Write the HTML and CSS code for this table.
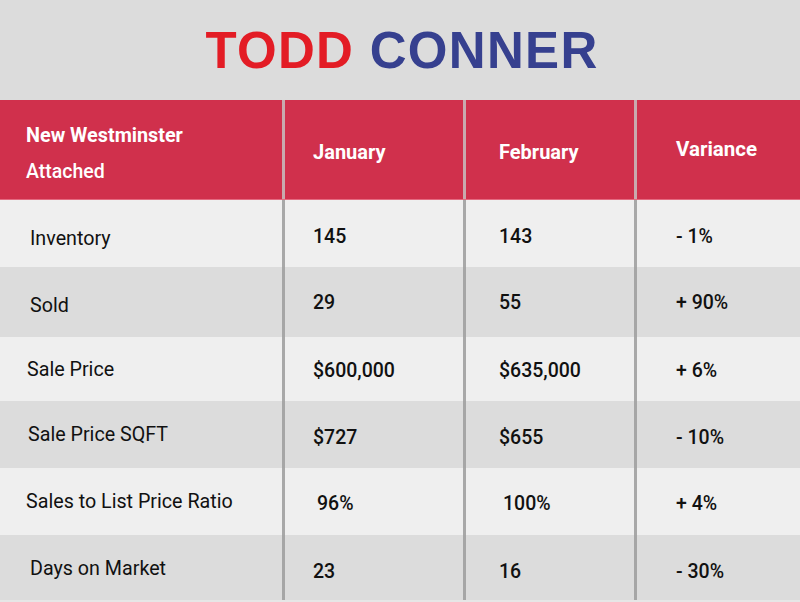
FILE: index.html
```html
<!DOCTYPE html>
<html lang="en">
<head>
<meta charset="utf-8">
<title>Todd Conner – New Westminster Attached</title>
<link rel="stylesheet" href="styles.css">
</head>
<body>
<header class="brand">
  <h1 class="brand-name"><span class="first">TODD</span> <span class="last">CONNER</span></h1>
</header>
<div class="table">
  <div class="row head">
    <div class="cell c1"><div class="area"><span class="area-name">New Westminster</span><span class="area-type">Attached</span></div></div>
    <div class="cell c2">January</div>
    <div class="cell c3">February</div>
    <div class="cell c4 up">Variance</div>
  </div>
  <div class="row light r1">
    <div class="cell c1 lbl">Inventory</div>
    <div class="cell c2 num">145</div>
    <div class="cell c3 num">143</div>
    <div class="cell c4 num">- 1%</div>
  </div>
  <div class="row dark r2">
    <div class="cell c1 lbl">Sold</div>
    <div class="cell c2 num">29</div>
    <div class="cell c3 num">55</div>
    <div class="cell c4 num">+ 90%</div>
  </div>
  <div class="row light r3">
    <div class="cell c1 lbl">Sale Price</div>
    <div class="cell c2 num">$600,000</div>
    <div class="cell c3 num">$635,000</div>
    <div class="cell c4 num">+ 6%</div>
  </div>
  <div class="row dark r4">
    <div class="cell c1 lbl">Sale Price SQFT</div>
    <div class="cell c2 num">$727</div>
    <div class="cell c3 num">$655</div>
    <div class="cell c4 num">- 10%</div>
  </div>
  <div class="row light r5">
    <div class="cell c1 lbl">Sales to List Price Ratio</div>
    <div class="cell c2 num indent">96%</div>
    <div class="cell c3 num indent">100%</div>
    <div class="cell c4 num">+ 4%</div>
  </div>
  <div class="row dark r6">
    <div class="cell c1 lbl">Days on Market</div>
    <div class="cell c2 num">23</div>
    <div class="cell c3 num">16</div>
    <div class="cell c4 num">- 30%</div>
  </div>
</div>
</body>
</html>
```
FILE: styles.css
```css
html {
  background: #e6e6e6;
}
body {
  margin: 0;
  width: 800px;
  font-family: Roboto, "Liberation Sans", Arial, sans-serif;
  color: #111;
}
.brand {
  height: 100px;
  background: #dcdcdc;
  display: flex;
  align-items: center;
  justify-content: center;
}
.brand-name {
  margin: 0;
  padding-top: 1px;
  padding-left: 4px;
  font-family: "Liberation Sans", Arial, sans-serif;
  font-weight: 700;
  font-size: 51px;
  letter-spacing: 1.3px;
  line-height: 1;
}
.first { color: #e31c25; }
.last { color: #36408f; }

.table {
  display: flex;
  flex-direction: column;
}
.row {
  display: grid;
  grid-template-columns: 282px 181px 171px 166px;
}
.cell {
  display: flex;
  align-items: center;
  padding-top: 4px;
}
.c2, .c3, .c4 {
  border-left: 3px solid rgba(160, 160, 160, 0.9);
}
.c1 { padding-left: 28px; }
.c2 { padding-left: 28px; }
.c3 { padding-left: 33px; }
.c4 { padding-left: 39px; }

.head {
  height: 100px;
  background: #d0304c;
  color: #fff;
  font-weight: 700;
  font-size: 20px;
  border-bottom: 1px solid #e46a80;
  box-sizing: border-box;
}
.head .cell { padding-top: 5px; }
.head .c2, .head .c3, .head .c4 { border-left-color: rgba(200, 190, 192, 0.85); }
.head .c1 { padding-left: 26px; padding-top: 8px; }
.head .up { padding-top: 0; padding-bottom: 1px; font-size: 20.5px; }
.area {
  display: flex;
  flex-direction: column;
  line-height: 36px;
}
.area-name {
  font-size: 19.8px;
  font-weight: 700;
}
.area-type {
  font-size: 19.5px;
  font-weight: 500;
}

.light { background: #efefef; }
.dark { background: #dcdcdc; }
.r1 { height: 67px; }
.r2 { height: 70px; }
.r3 { height: 64px; }
.r4 { height: 67px; }
.r5 { height: 67px; }
.r6 { height: 65px; }

.lbl {
  font-size: 19.7px;
  font-weight: 400;
}
.num {
  font-size: 19.5px;
  font-weight: 500;
}
.indent { padding-left: 32px; }
.c3.indent { padding-left: 37px; }

/* per-row nudges matching the source artwork */
.r1 .lbl { padding-left: 30px; padding-top: 10px; }
.r1 .num { padding-top: 6px; }
.r2 .lbl { padding-left: 30px; padding-top: 6px; }
.r2 .num { padding-top: 0; }
.r3 .lbl { padding-left: 27px; padding-top: 0; }
.r3 .num { padding-top: 2px; }
.r4 .lbl { padding-left: 28px; padding-top: 0; }
.r4 .num { padding-top: 6px; }
.r5 .lbl { padding-left: 26px; padding-top: 0; }
.r6 .lbl { padding-left: 30px; padding-top: 2px; }
.r6 .num { padding-top: 8px; }
```
